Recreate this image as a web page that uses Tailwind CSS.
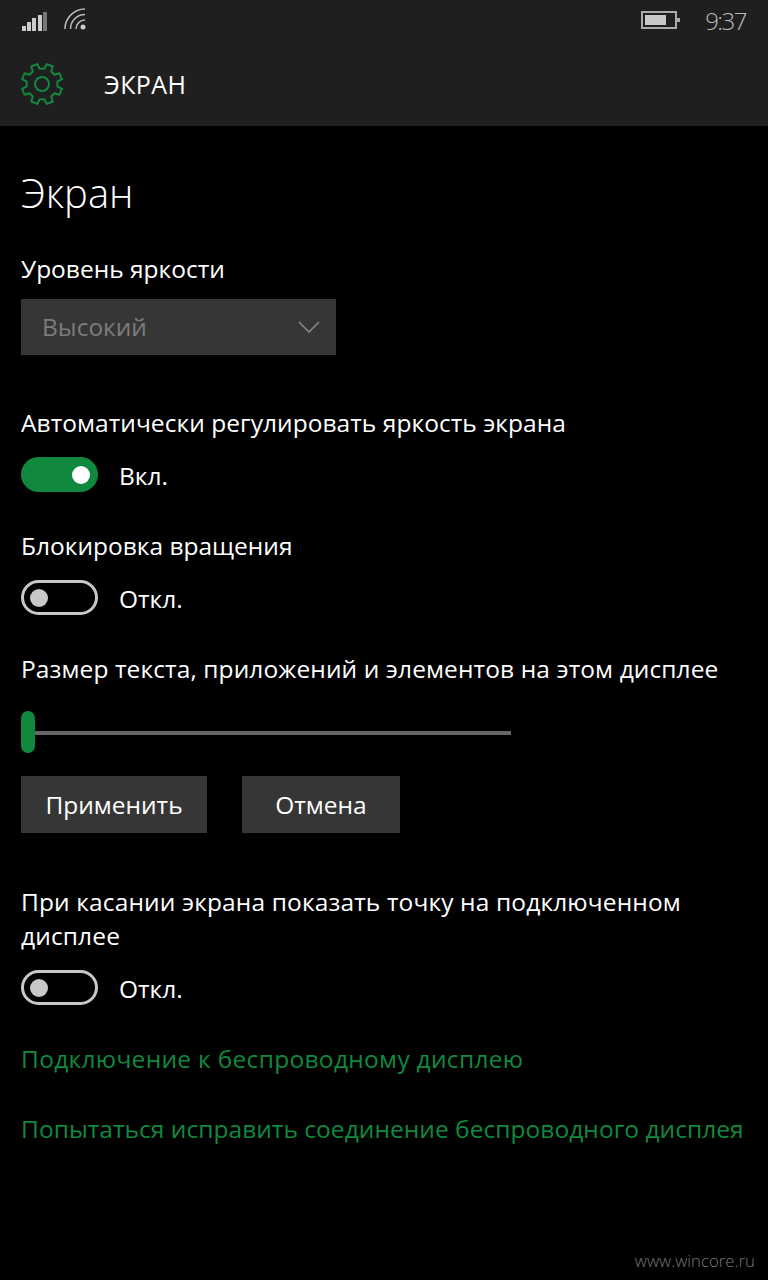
<!DOCTYPE html>
<html><head><meta charset="utf-8"><script src="https://cdn.jsdelivr.net/npm/@tailwindcss/browser@4"></script></head>
<body class="bg-black">
<div class="w-[768px] h-[1280px] relative overflow-hidden bg-black text-white font-['Open_Sans','Noto_Sans',sans-serif] text-[24.5px] leading-[34px]">
  <header class="h-[126px] bg-[#1f1f1f] pl-[22px] pr-[22px]">
    <div class="h-[44px] flex items-center">
      <div class="flex items-end gap-[1.2px] h-[19px] w-[42px] mt-[-2px]">
        <span class="w-[4px] h-[5px] bg-[#ccc]"></span><span class="w-[4px] h-[9px] bg-[#ccc]"></span><span class="w-[4px] h-[13px] bg-[#ccc]"></span><span class="w-[4px] h-[16px] bg-[#ccc]"></span><span class="w-[4px] h-[19px] bg-[#777]"></span>
      </div>
      <svg class="w-[24px] h-[24px] mt-[-6px]" viewBox="0 0 24 24" fill="none" stroke="#bbb" stroke-width="1.5"><path d="M1 22A20 20 0 0 1 21 2"/><path d="M6.5 22A14.500 14.500 0 0 1 21 7.500"/><path d="M12 22A9 9 0 0 1 21 13"/><circle cx="19" cy="20" r="2.500" fill="#ccc" stroke="none"/></svg>
      <div class="ml-auto w-[36px] h-[18px] mt-[-4px] mr-[28px] relative border-2 border-[#aaa] p-[2px]">
        <div class="w-[21px] h-full bg-[#c8c8c8]"></div>
        <span class="absolute right-[-5px] top-[5px] w-[3px] h-[4px] bg-[#aaa]"></span>
      </div>
      <span class="text-[24px] tracking-[-1.5px] font-light text-[#bbb] mt-[-3px]">9:37</span>
    </div>
    <div class="flex items-center h-[80px] -ml-[1px]">
      <svg class="w-[42px] h-[42px] mr-[41px]" viewBox="-21 -21 42 42" fill="none" stroke="#10893e" stroke-width="2" stroke-linejoin="round"><polygon points="2.29,-15.33 4.79,-19.93 10.71,-17.48 9.22,-12.46 12.46,-9.22 17.48,-10.71 19.93,-4.79 15.33,-2.29 15.33,2.29 19.93,4.79 17.48,10.71 12.46,9.22 9.22,12.46 10.71,17.48 4.79,19.93 2.29,15.33 -2.29,15.33 -4.79,19.93 -10.71,17.48 -9.22,12.46 -12.46,9.22 -17.48,10.71 -19.93,4.79 -15.33,2.29 -15.33,-2.29 -19.93,-4.79 -17.48,-10.71 -12.46,-9.22 -9.22,-12.46 -10.71,-17.48 -4.79,-19.93 -2.29,-15.33"/><circle r="7"/></svg>
      <span class="text-[25px] font-medium tracking-[0.4px]">ЭКРАН</span>
    </div>
  </header>
  <main class="pl-[21px] pt-[40px]">
    <h1 class="text-[40px] leading-[54px] font-light">Экран</h1>
    <p class="mt-[32px]">Уровень яркости</p>
    <div class="mt-[13px] w-[315px] h-[56px] bg-[#363636] flex items-center justify-between pl-[21px] pr-[16px] text-[#7c7c7c]">
      <span>Высокий</span>
      <svg class="w-[22px] h-[12px]" viewBox="0 0 22 12" fill="none" stroke="#8a8a8a" stroke-width="1.500"><path d="M1 1l10 10L21 1"/></svg>
    </div>
    <p class="mt-[51px] tracking-[0.05px]">Автоматически регулировать яркость экрана</p>
    <div class="mt-[17px] flex items-start gap-[21px] h-[36px]">
      <div class="w-[77px] h-[35px] rounded-full bg-[#10893e] flex items-center justify-end pr-[8px]"><span class="w-[18px] h-[18px] rounded-full bg-white"></span></div>
      <span class="mt-[2px]">Вкл.</span>
    </div>
    <p class="mt-[36px]">Блокировка вращения</p>
    <div class="mt-[17px] flex items-start gap-[21px] h-[36px]">
      <div class="w-[77px] h-[35px] rounded-full border-[3px] border-[#c8c8c8] flex items-center pl-[6px]"><span class="w-[18px] h-[18px] rounded-full bg-[#c8c8c8]"></span></div>
      <span class="mt-[2px]">Откл.</span>
    </div>
    <p class="mt-[36px] tracking-[0.1px]">Размер текста, приложений и элементов на этом дисплее</p>
    <div class="mt-[25px] w-[490px] h-[42px] flex items-start">
      <span class="w-[14px] h-[42px] rounded-full bg-[#10893e]"></span>
      <span class="flex-1 h-[4px] mt-[20px] bg-[#666]"></span>
    </div>
    <div class="mt-[23px] flex gap-[35px]">
      <button class="w-[186px] h-[57px] bg-[#363636]">Применить</button>
      <button class="w-[158px] h-[57px] bg-[#363636]">Отмена</button>
    </div>
    <p class="mt-[52px] w-[720px] tracking-[0.13px]">При касании экрана показать точку на подключенном дисплее</p>
    <div class="mt-[17px] flex items-start gap-[21px] h-[36px]">
      <div class="w-[77px] h-[35px] rounded-full border-[3px] border-[#c8c8c8] flex items-center pl-[6px]"><span class="w-[18px] h-[18px] rounded-full bg-[#c8c8c8]"></span></div>
      <span class="mt-[2px]">Откл.</span>
    </div>
    <p class="mt-[36px] text-[#10893e] tracking-[0.3px]">Подключение к беспроводному дисплею</p>
    <p class="mt-[36px] text-[#10893e] tracking-[0.04px]">Попытаться исправить соединение беспроводного дисплея</p>
  </main>
  <span class="absolute right-[13px] bottom-[7px] text-[16.800px] font-light leading-[24px] text-[#777]">www.wincore.ru</span>
</div>
</body></html>
